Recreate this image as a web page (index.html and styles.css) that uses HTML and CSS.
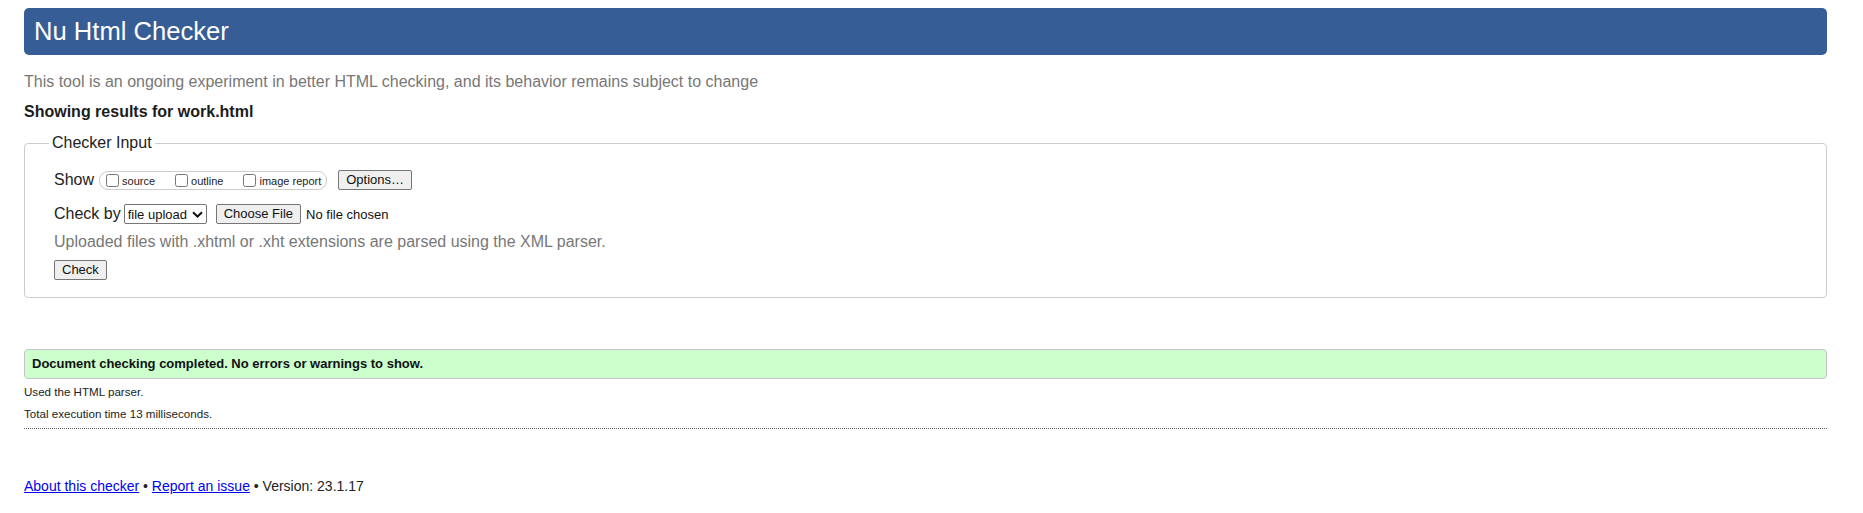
FILE: index.html
```html
<!DOCTYPE html>
<html lang="en">
<head>
<meta charset="utf-8">
<title>Showing results for work.html - Nu Html Checker</title>
<link rel="stylesheet" href="styles.css">
</head>
<body>
<h1 class="title">Nu Html Checker</h1>
<p class="intro">This tool is an ongoing experiment in better HTML checking, and its behavior remains subject to change</p>
<p class="showing">Showing results for work.html</p>
<form class="checker">
  <fieldset class="input-set">
    <legend class="legend">Checker Input</legend>
    <div class="row row-show">
      <span class="row-label">Show</span>
      <span class="pill">
        <label class="opt"><input type="checkbox" class="cb"><span class="opt-text">source</span></label>
        <label class="opt"><input type="checkbox" class="cb"><span class="opt-text">outline</span></label>
        <label class="opt opt-last"><input type="checkbox" class="cb"><span class="opt-text">image report</span></label>
      </span>
      <button type="button" class="btn btn-options">Options…</button>
    </div>
    <div class="row row-by">
      <span class="row-label row-label-by">Check by</span>
      <span class="select-wrap">
        <select class="select"><option>file upload</option></select>
        <svg class="chev" width="11" height="7" viewBox="0 0 11 7"><path d="M1 1.2 L5.5 5.5 L10 1.2" fill="none" stroke="#111" stroke-width="2"/></svg>
      </span>
      <button type="button" class="btn btn-file">Choose File</button>
      <span class="nofile">No file chosen</span>
    </div>
    <p class="hint">Uploaded files with .xhtml or .xht extensions are parsed using the XML parser.</p>
    <div class="row row-submit">
      <button type="button" class="btn btn-check">Check</button>
    </div>
  </fieldset>
</form>
<div class="results">
  <p class="success">Document checking completed. No errors or warnings to show.</p>
  <p class="detail">Used the HTML parser.</p>
  <p class="detail detail-last">Total execution time 13 milliseconds.</p>
</div>
<p class="footer"><a href="#" class="flink">About this checker</a> • <a href="#" class="flink">Report an issue</a> • Version: 23.1.17</p>
</body>
</html>
```
FILE: styles.css
```css
html, body {
  background: #ffffff;
}
body {
  margin: 0;
  padding: 0 36px 0 24px;
  font-family: "Liberation Sans", Arial, sans-serif;
  color: #222222;
  font-size: 16px;
}
.title {
  margin: 8px 0 0;
  height: 47px;
  line-height: 46px;
  padding: 0 10px;
  font-size: 25.6px;
  font-weight: normal;
  color: #ffffff;
  background: #365d95;
  border-radius: 5px;
}
.intro {
  margin: 15px 0 0;
  line-height: 24px;
  font-size: 16px;
  color: #777777;
}
.showing {
  margin: 6px 0 0;
  line-height: 24px;
  font-size: 16px;
  font-weight: bold;
  color: #1c1c1c;
}
.checker {
  margin: 7px 0 0;
}
.input-set {
  margin: 0;
  min-width: 0;
  border: 1px solid #cccccc;
  border-radius: 4px;
  padding: 13px 24px 15px 29px;
}
.legend {
  margin-left: -5px;
  padding: 0 3px;
  line-height: 24px;
  font-size: 16px;
  color: #222222;
}
.row {
  display: flex;
  align-items: center;
  height: 24px;
}
.row-show {
  margin: 0;
}
.row-by {
  margin-top: 10px;
}
.row-label {
  font-size: 16px;
  line-height: 24px;
  margin-right: 5px;
}
.row-label-by {
  margin-right: 3px;
}
.pill {
  display: inline-flex;
  align-items: center;
  box-sizing: border-box;
  height: 19px;
  border: 1px solid #cccccc;
  border-radius: 9px;
  padding: 0 5px 0 2px;
  margin-right: 11px;
}
.opt {
  display: inline-flex;
  align-items: center;
  margin-right: 16px;
}
.opt-last {
  margin-right: 0;
}
.cb {
  width: 13px;
  height: 13px;
  margin: 0 3px 0 4px;
}
.opt-text {
  font-size: 11px;
  line-height: 13px;
  padding-top: 3px;
  color: #222222;
}
.btn {
  box-sizing: border-box;
  height: 20px;
  padding: 0 7px;
  font-family: "Liberation Sans", Arial, sans-serif;
  font-size: 13px;
  line-height: 18px;
  color: #111111;
  background: #efefef;
  border: 1px solid #767676;
  border-radius: 2px;
}
.select-wrap {
  position: relative;
  display: inline-block;
  height: 20px;
  margin-right: 9px;
}
.select {
  appearance: none;
  -webkit-appearance: none;
  box-sizing: border-box;
  width: 83px;
  height: 20px;
  padding: 0 0 0 3px;
  font-family: "Liberation Sans", Arial, sans-serif;
  font-size: 13px;
  color: #111111;
  background: #ffffff;
  border: 1px solid #767676;
  border-radius: 2px;
}
.chev {
  position: absolute;
  right: 4px;
  top: 7px;
}
.nofile {
  margin-left: 5px;
  font-size: 13px;
  color: #111111;
}
.hint {
  margin: 4px 0 0;
  line-height: 24px;
  font-size: 16px;
  color: #777777;
}
.row-submit {
  margin-top: 4px;
}
.results {
  margin-top: 51px;
  padding-bottom: 5px;
  border-bottom: 1px dotted #666666;
}
.success {
  margin: 0;
  box-sizing: border-box;
  height: 30px;
  line-height: 28px;
  padding: 0 7px;
  font-size: 13px;
  font-weight: bold;
  color: #111111;
  background: #ccffcc;
  border: 1px solid #c4c4c4;
  border-radius: 4px;
}
.detail {
  margin: 4px 0 0;
  font-size: 11.6px;
  line-height: 18px;
  color: #222222;
}
.footer {
  margin: 47px 0 0;
  font-size: 14px;
  line-height: 21px;
  color: #222222;
}
.flink {
  color: #0000ee;
  text-decoration: underline;
}
```
